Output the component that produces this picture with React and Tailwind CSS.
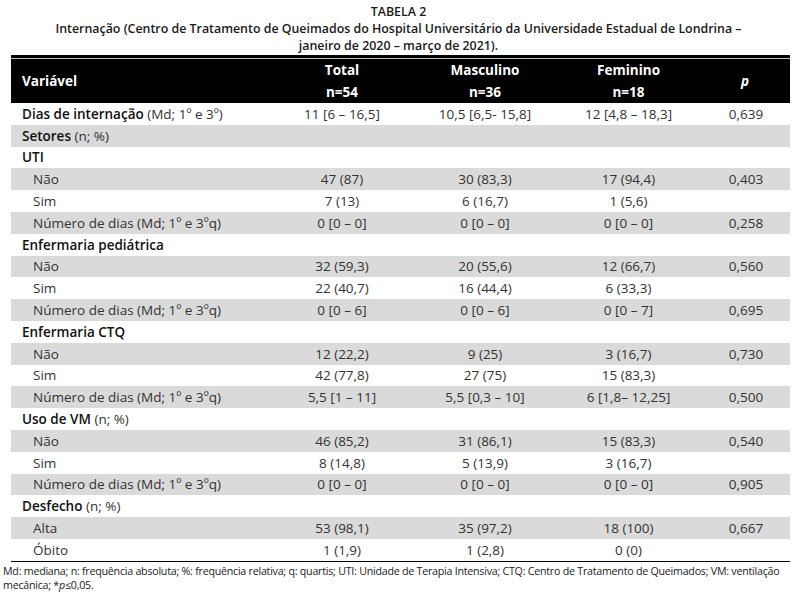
import React from "react";

const rows = [
  { label: "Dias de internação", extra: " (Md; 1º e 3º)", kind: "cat", v: ["11 [6 – 16,5]", "10,5 [6,5- 15,8]", "12 [4,8 – 18,3]", "0,639"] },
  { label: "Setores", extra: " (n; %)", kind: "cat", v: ["", "", "", ""] },
  { label: "UTI", kind: "cat", v: ["", "", "", ""] },
  { label: "Não", kind: "sub", v: ["47 (87)", "30 (83,3)", "17 (94,4)", "0,403"] },
  { label: "Sim", kind: "sub", v: ["7 (13)", "6 (16,7)", "1 (5,6)", ""] },
  { label: "Número de dias (Md; 1º e 3ºq)", kind: "sub", v: ["0 [0 – 0]", "0 [0 – 0]", "0 [0 – 0]", "0,258"] },
  { label: "Enfermaria pediátrica", kind: "cat", v: ["", "", "", ""] },
  { label: "Não", kind: "sub", v: ["32 (59,3)", "20 (55,6)", "12 (66,7)", "0,560"] },
  { label: "Sim", kind: "sub", v: ["22 (40,7)", "16 (44,4)", "6 (33,3)", ""] },
  { label: "Número de dias (Md; 1º e 3ºq)", kind: "sub", v: ["0 [0 – 6]", "0 [0 – 6]", "0 [0 – 7]", "0,695"] },
  { label: "Enfermaria CTQ", kind: "cat", v: ["", "", "", ""] },
  { label: "Não", kind: "sub", v: ["12 (22,2)", "9 (25)", "3 (16,7)", "0,730"] },
  { label: "Sim", kind: "sub", v: ["42 (77,8)", "27 (75)", "15 (83,3)", ""] },
  { label: "Número de dias (Md; 1º e 3ºq)", kind: "sub", v: ["5,5 [1 – 11]", "5,5 [0,3 – 10]", "6 [1,8– 12,25]", "0,500"] },
  { label: "Uso de VM", extra: " (n; %)", kind: "cat", v: ["", "", "", ""] },
  { label: "Não", kind: "sub", v: ["46 (85,2)", "31 (86,1)", "15 (83,3)", "0,540"] },
  { label: "Sim", kind: "sub", v: ["8 (14,8)", "5 (13,9)", "3 (16,7)", ""] },
  { label: "Número de dias (Md; 1º e 3ºq)", kind: "sub", v: ["0 [0 – 0]", "0 [0 – 0]", "0 [0 – 0]", "0,905"] },
  { label: "Desfecho", extra: " (n; %)", kind: "cat", v: ["", "", "", ""] },
  { label: "Alta", kind: "sub", v: ["53 (98,1)", "35 (97,2)", "18 (100)", "0,667"] },
  { label: "Óbito", kind: "sub", v: ["1 (1,9)", "1 (2,8)", "0 (0)", ""] },
];

const grid = "grid grid-cols-[261px_140px_146px_141px_1fr]";

export default function App() {
  return (
    <div className="w-[797px] h-[594px] bg-white text-[#2b2b2b] overflow-hidden" style={{ fontFamily: "'Open Sans', 'Noto Sans', sans-serif" }}>
      <div className="pt-[3px] text-center text-[12.4px] font-semibold leading-[17px] text-[#1a1a1a]">
        <div>TABELA 2</div>
        <div>Internação (Centro de Tratamento de Queimados do Hospital Universitário da Universidade Estadual de Londrina –</div>
        <div>janeiro de 2020 – março de 2021).</div>
      </div>
      <div className="ml-[11px] w-[779px] mt-[1px]">
        <div className="h-[3px] bg-black" />
        <div className="h-[1px] bg-[#bdbdbd]" />
        <div className={`${grid} h-[44px] bg-black text-white font-bold text-[13.5px] items-center`}>
          <div className="pl-[11px]">Variável</div>
          <div className="text-center leading-[22px]"><div>Total</div><div>n=54</div></div>
          <div className="text-center leading-[22px]"><div>Masculino</div><div>n=36</div></div>
          <div className="text-center leading-[22px]"><div>Feminino</div><div>n=18</div></div>
          <div className="text-center italic pl-[1px]">p</div>
        </div>
        {rows.map((r, i) => (
          <div key={i} className={`${grid} h-[21.8px] items-center text-[13.5px] ${i % 2 === 1 ? "bg-[#dadada]" : "bg-white"}`}>
            <div className={r.kind === "cat" ? "pl-[11px] whitespace-nowrap" : "pl-[22px] whitespace-nowrap text-[#333]"}>
              {r.kind === "cat" ? (
                <>
                  <span className="font-semibold text-[#111]">{r.label}</span>
                  {r.extra && <span className="text-[#333]">{r.extra}</span>}
                </>
              ) : (
                r.label
              )}
            </div>
            {r.v.map((x, j) => (
              <div key={j} className={`text-center whitespace-nowrap text-[#333] ${j === 3 ? "pl-[3px]" : ""}`}>{x}</div>
            ))}
          </div>
        ))}
        <div className="h-[1px] bg-black" />
      </div>
      <div className="pl-[3px] pt-[2px] text-[10.7px] leading-[14px] text-[#222] whitespace-nowrap tracking-[-0.25px]">
        <div>Md: mediana; n: frequência absoluta; %: frequência relativa; q: quartis; UTI: Unidade de Terapia Intensiva; CTQ: Centro de Tratamento de Queimados; VM: ventilação</div>
        <div>mecânica; *<span className="italic">p</span>≤0,05.</div>
      </div>
    </div>
  );
}
